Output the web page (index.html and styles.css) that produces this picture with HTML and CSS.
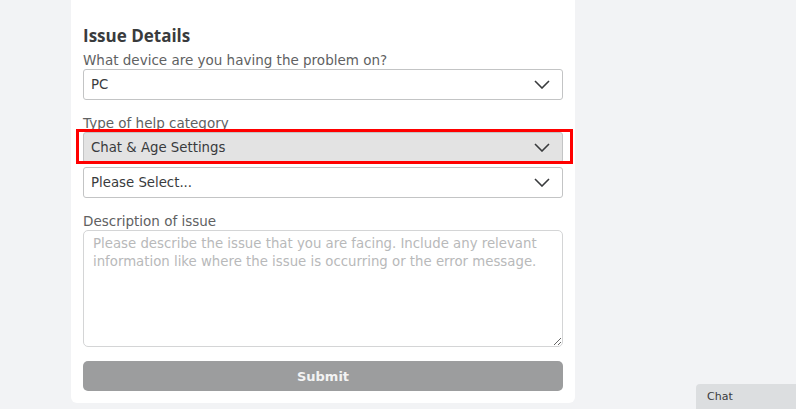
FILE: index.html
```html
<!DOCTYPE html>
<html>
<head>
<meta charset="utf-8">
<link rel="stylesheet" href="styles.css">
</head>
<body>
<div class="page">
  <form class="card">
    <h2 class="title">Issue Details</h2>
    <label class="label">What device are you having the problem on?</label>
    <div class="select">
      <span class="value">PC</span>
      <svg class="chev" viewBox="0 0 16 9" width="16" height="9"><path d="M1 1 L8 8 L15 1" fill="none" stroke="#393b3d" stroke-width="1.6"/></svg>
    </div>
    <label class="label label-gap">Type of help category</label>
    <div class="hl-wrap">
      <div class="select select-filled">
        <span class="value">Chat &amp; Age Settings</span>
        <svg class="chev" viewBox="0 0 16 9" width="16" height="9"><path d="M1 1 L8 8 L15 1" fill="none" stroke="#393b3d" stroke-width="1.6"/></svg>
      </div>
      <div class="highlight"></div>
    </div>
    <div class="select select-next">
      <span class="value">Please Select...</span>
      <svg class="chev" viewBox="0 0 16 9" width="16" height="9"><path d="M1 1 L8 8 L15 1" fill="none" stroke="#393b3d" stroke-width="1.6"/></svg>
    </div>
    <label class="label label-desc">Description of issue</label>
    <textarea class="desc" placeholder="Please describe the issue that you are facing. Include any relevant information like where the issue is occurring or the error message."></textarea>
    <button type="button" class="submit">Submit</button>
  </form>
  <div class="chat-tab">Chat</div>
</div>
</body>
</html>
```
FILE: styles.css
```css
html, body {
  margin: 0;
  padding: 0;
  background: #f2f3f5;
  height: 100%;
  overflow: hidden;
}
.page {
  position: relative;
  width: 796px;
  height: 409px;
  font-family: "DejaVu Sans", "Noto Sans", sans-serif;
}
.card {
  margin-left: 71px;
  width: 480px;
  padding: 26px 12px 12px 12px;
  background: #fff;
  border-radius: 0 0 6px 6px;
  display: flex;
  flex-direction: column;
}
.title {
  margin: 0 0 6px 0;
  font-family: "Open Sans", "DejaVu Sans", sans-serif;
  font-size: 17px;
  line-height: 20px;
  font-weight: bold;
  color: #393b3d;
}
.label {
  font-size: 13.5px;
  line-height: 16px;
  color: #606162;
  margin-bottom: 1px;
}
.label-gap {
  margin-top: 15px;
}
.label-desc {
  margin-top: 15px;
}
.select {
  box-sizing: border-box;
  height: 31px;
  width: 480px;
  border: 1px solid #c3c4c5;
  border-radius: 3px;
  display: flex;
  align-items: center;
  justify-content: space-between;
  padding: 0 12px 0 7px;
  background: #fff;
}
.select-filled {
  background: #e3e3e3;
}
.select-next {
  margin-top: 4px;
}
.value {
  font-size: 13.3px;
  color: #393b3d;
}
.chev {
  display: block;
}
.hl-wrap {
  position: relative;
}
.highlight {
  position: absolute;
  left: -7px;
  top: -3px;
  width: 491px;
  height: 29px;
  border: 3px solid #ff0000;
}
.desc {
  box-sizing: border-box;
  width: 480px;
  height: 117px;
  border: 1px solid #d4d5d6;
  border-radius: 5px;
  padding: 4px 9px;
  font-family: "DejaVu Sans", "Noto Sans", sans-serif;
  font-size: 13.3px;
  line-height: 18px;
  resize: vertical;
  margin: 0;
}
.desc::placeholder {
  color: #b8b9ba;
}
.submit {
  margin-top: 14px;
  height: 30px;
  width: 480px;
  border: none;
  border-radius: 5px;
  background: #9c9d9e;
  color: #f3f3f3;
  font-family: "DejaVu Sans", sans-serif;
  font-weight: bold;
  font-size: 13px;
}
.chat-tab {
  position: absolute;
  left: 696px;
  top: 384px;
  width: 100px;
  height: 25px;
  box-sizing: border-box;
  padding: 6px 0 0 11px;
  background: #dcdee0;
  border-radius: 4px 0 0 0;
  font-size: 11px;
  color: #393b3d;
}
```
